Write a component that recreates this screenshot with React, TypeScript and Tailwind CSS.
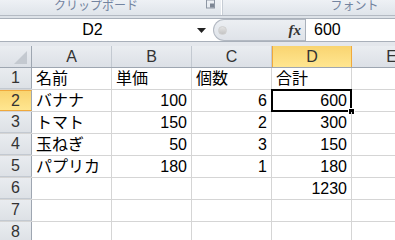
import React from "react";

type Row = { n: number; a?: string; b?: string; c?: string; d?: string };

const rows: Row[] = [
  { n: 1, a: "名前", b: "単価", c: "個数", d: "合計" },
  { n: 2, a: "バナナ", b: "100", c: "6", d: "600" },
  { n: 3, a: "トマト", b: "150", c: "2", d: "300" },
  { n: 4, a: "玉ねぎ", b: "50", c: "3", d: "150" },
  { n: 5, a: "パプリカ", b: "180", c: "1", d: "180" },
  { n: 6, d: "1230" },
  { n: 7 },
  { n: 8 },
];

const cols = ["A", "B", "C", "D", "E"];

// numbers are right aligned, text left aligned (Excel default)
const isNum = (v?: string) => !!v && /^\d+$/.test(v);

function Cell({ value, selected }: { value?: string; selected?: boolean }) {
  return (
    <div
      className={`relative w-[80px] shrink-0 h-full border-r border-[#d5d5d5] px-[4px] flex items-center ${
        isNum(value) ? "justify-end" : "justify-start"
      }`}
    >
      <span className="whitespace-nowrap">{value}</span>
      {selected && (
        <>
          <div className="absolute -left-[1px] -top-[1px] -right-[1px] -bottom-[1px] border-2 border-black pointer-events-none" />
          <div className="absolute -right-[4px] -bottom-[4px] w-[7px] h-[7px] bg-black border border-white" />
        </>
      )}
    </div>
  );
}

export default function App() {
  return (
    <div
      className="w-[395px] h-[240px] overflow-hidden bg-white text-[16px] text-black"
      style={{ fontFamily: '"Liberation Sans", "Noto Sans CJK JP", sans-serif' }}
    >
      {/* ribbon group labels, cut off at the top */}
      <div className="h-[16px] flex overflow-hidden bg-gradient-to-b from-[#eef1f5] to-[#dfe4ea] border-b border-[#b4bac3] text-[12px] leading-[12px] text-[#7384a0]">
        <div className="w-[221px] shrink-0 flex items-start">
          <div className="flex-1 text-center pr-[14px] -mt-[1px]" style={{ fontFamily: '"Noto Sans CJK JP", sans-serif' }}>
            クリップボード
          </div>
          <svg width="10" height="9" viewBox="0 0 10 9" className="mr-[5px] shrink-0">
            <rect x="0.5" y="0" width="8" height="8" fill="none" stroke="#8d96a3" />
            <rect x="4" y="3.5" width="4" height="4" fill="#7d8694" />
          </svg>
        </div>
        <div className="w-[1px] shrink-0 bg-white" />
        <div className="w-[264px] shrink-0 text-center -mt-[1px] border-l border-[#c6ccd4]" style={{ fontFamily: '"Noto Sans CJK JP", sans-serif' }}>
          フォント
        </div>
      </div>
      <div className="h-[2px] bg-[#dde2e8]" />

      {/* formula bar */}
      <div className="h-[24px] flex border-y border-[#a9b0ba] bg-white">
        <div className="w-[213px] shrink-0 flex items-center">
          <div className="w-[185px] text-center leading-none">D2</div>
          <svg width="9" height="5" viewBox="0 0 9 5" className="ml-[12px]">
            <path d="M0 0h9L4.5 5z" fill="#222" />
          </svg>
        </div>
        <div className="w-[92px] shrink-0 h-full relative rounded-l-[11px] border border-r-0 border-[#b3b9c2] bg-gradient-to-b from-[#eceff3] to-[#dfe3e9] flex items-center">
          <div className="ml-[4px] w-[9px] h-[9px] rounded-full bg-gradient-to-b from-[#e3e3e3] to-[#c4c4c4] border border-[#d0d0d0]" />
          <span
            className="ml-auto mr-[4px] text-[15px] font-bold italic leading-none text-[#333]"
            style={{ fontFamily: '"Liberation Serif", serif' }}
          >
            fx
          </span>
        </div>
        <div className="flex-1 border-l border-[#a9b0ba] pl-[8px] flex items-center leading-none">600</div>
      </div>
      <div className="h-[4px] bg-[#e4e7ec]" />

      {/* column headers */}
      <div className="h-[22px] flex border-b border-[#9ea6b1] bg-gradient-to-b from-[#eaedf1] to-[#dce0e6] text-[#333]">
        <div className="w-[32px] shrink-0 h-full border-r border-[#9ea6b1] relative">
          <svg width="13" height="13" viewBox="0 0 13 13" className="absolute right-[4px] bottom-[3px]">
            <path d="M13 0V13H0z" fill="#c4c9d0" />
          </svg>
        </div>
        {cols.map((c) => (
          <div
            key={c}
            className={`w-[80px] shrink-0 h-full flex items-center justify-center ${
              c === "D"
                ? "bg-gradient-to-b from-[#f9d470] to-[#ffe690] border-x border-[#f0a93c]"
                : "border-r border-[#c3c9d1]"
            }`}
          >
            {c}
          </div>
        ))}
      </div>

      {/* rows */}
      {rows.map((r) => (
        <div key={r.n} className="h-[22px] flex border-b border-[#d5d5d5]">
          <div
            className={`w-[32px] shrink-0 h-full flex items-center justify-center border-r border-[#9ea6b1] text-[#333] ${
              r.n === 2
                ? "bg-gradient-to-b from-[#f9d470] to-[#ffe690] border-y border-y-[#f0a93c]"
                : "bg-gradient-to-b from-[#e9ecf0] to-[#dde1e6] border-b border-b-[#c3c9d1]"
            }`}
          >
            {r.n}
          </div>
          <Cell value={r.a} />
          <Cell value={r.b} />
          <Cell value={r.c} />
          <Cell value={r.d} selected={r.n === 2} />
          <Cell />
        </div>
      ))}
    </div>
  );
}
